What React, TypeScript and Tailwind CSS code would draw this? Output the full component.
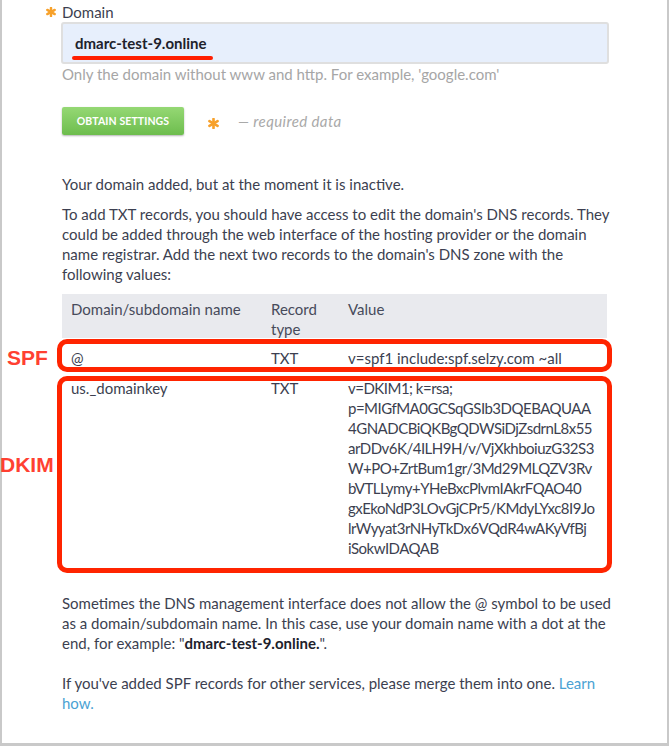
import React from "react";

const Star = ({ className = "" }: { className?: string }) => (
  <svg viewBox="0 0 10 10" className={className} aria-hidden="true">
    <g stroke="#f7a12b" strokeWidth="2.4" strokeLinecap="round">
      <line x1="5" y1="0.8" x2="5" y2="9.2" />
      <line x1="1.3" y1="2.9" x2="8.7" y2="7.1" />
      <line x1="1.3" y1="7.1" x2="8.7" y2="2.9" />
    </g>
  </svg>
);

const dkim = [
  "v=DKIM1; k=rsa;",
  "p=MIGfMA0GCSqGSIb3DQEBAQUAA",
  "4GNADCBiQKBgQDWSiDjZsdrnL8x55",
  "arDDv6K/4ILH9H/v/VjXkhboiuzG32S3",
  "W+PO+ZrtBum1gr/3Md29MLQZV3Rv",
  "bVTLLymy+YHeBxcPlvmIAkrFQAO40",
  "gxEkoNdP3LOvGjCPr5/KMdyLYxc8I9Jo",
  "lrWyyat3rNHyTkDx6VQdR4wAKyVfBj",
  "iSokwIDAQAB",
];

export default function App() {
  return (
    <div className="min-h-[748px] bg-white font-['Lato',sans-serif] text-[15px] leading-[20px] text-[#3c3f50]">
      <div className="w-[669px] border-x-2 border-b-[3px] border-[#c9c9c9] pl-[60px] pt-[2px] pb-[30px]">
        {/* Label */}
        <div className="flex items-center -ml-[16px]">
          <Star className="w-[10px] h-[10px] mr-[6px]" />
          <span>Domain</span>
        </div>
        {/* Input */}
        <div className="relative -ml-px w-[548px] h-[42px] border-2 border-[#dfdfdf] rounded-[3px] bg-[#e7effc] pl-[12px] flex items-center">
          <span className="font-bold text-[#20212b]">dmarc-test-9.online</span>
          <div className="absolute left-[9px] top-[32px] w-[141px] h-[4px] rounded-full bg-[#ff1e00]" />
        </div>
        <div className="text-[#a6a6a6]">Only the domain without www and http. For example, 'google.com'</div>

        {/* Button row */}
        <div className="mt-[23px] flex items-center">
          <button className="w-[122px] h-[28px] rounded-[2px] bg-gradient-to-b from-[#95d874] to-[#6dbd4d] shadow-[0_1px_2px_rgba(0,0,0,0.3)] text-white font-bold text-[10.5px] leading-none tracking-[0.1px]">
            OBTAIN SETTINGS
          </button>
          <Star className="ml-[24px] mt-[5px] w-[11px] h-[11px]" />
          <span className="ml-[19px] italic text-[#a9a9a9] tracking-[0.4px]">— required data</span>
        </div>

        <p className="mt-[39px]">Your domain added, but at the moment it is inactive.</p>
        <p className="mt-[10px] whitespace-nowrap">
          To add TXT records, you should have access to edit the domain's DNS records. They
          <br />
          could be added through the web interface of the hosting provider or the domain
          <br />
          name registrar. Add the next two records to the domain's DNS zone with the
          <br />
          following values:
        </p>

        {/* Table */}
        <div className="relative mt-[10px] w-[545px]">
          <div className="grid grid-cols-[200px_77px_268px] bg-[#e9eaee] h-[44px] text-[#474b5b]">
            <div className="pl-[9px] pt-[5px]">Domain/subdomain name</div>
            <div className="pl-[9px] pt-[5px]">
              Record
              <br />
              type
            </div>
            <div className="pl-[9px] pt-[5px]">Value</div>
          </div>
          <div className="grid grid-cols-[200px_77px_268px] pt-[10px] pb-[5px]">
            <div className="pl-[9px]">@</div>
            <div className="pl-[9px]">TXT</div>
            <div className="pl-[9px]">v=spf1 include:spf.selzy.com ~all</div>
          </div>
          <div className="grid grid-cols-[200px_77px_268px] pt-[5px] pb-[10px]">
            <div className="pl-[9px]">us._domainkey</div>
            <div className="pl-[9px]">TXT</div>
            <div className="pl-[9px] whitespace-nowrap tracking-[-0.5px]">
              {dkim.map((l) => (
                <div key={l}>{l}</div>
              ))}
            </div>
          </div>

          {/* Annotations */}
          <div className="absolute left-[-5px] top-[45px] w-[555px] h-[33px] border-[5px] border-[#ff2400] rounded-[10px]" />
          <div className="absolute left-[-5px] top-[82px] w-[555px] h-[197px] border-[5px] border-[#ff2400] rounded-[10px]" />
          <div className="absolute left-[-55px] top-[53px] font-['Liberation_Sans',sans-serif] font-bold text-[21px] leading-[21px] text-[#ff4031]">
            SPF
          </div>
          <div className="absolute left-[-62px] top-[160px] font-['Liberation_Sans',sans-serif] font-bold text-[21px] leading-[21px] text-[#ff4031]">
            DKIM
          </div>
        </div>

        <p className="mt-[25px] whitespace-nowrap">
          Sometimes the DNS management interface does not allow the @ symbol to be used
          <br />
          as a domain/subdomain name. In this case, use your domain name with a dot at the
          <br />
          end, for example: "<b className="font-bold text-[#20212b]">dmarc-test-9.online.</b>".
        </p>
        <p className="mt-[20px] whitespace-nowrap">
          If you've added SPF records for other services, please merge them into one.{" "}
          <a className="text-[#4aa2d3]">Learn</a>
          <br />
          <a className="text-[#4aa2d3]">how.</a>
        </p>
      </div>
    </div>
  );
}
